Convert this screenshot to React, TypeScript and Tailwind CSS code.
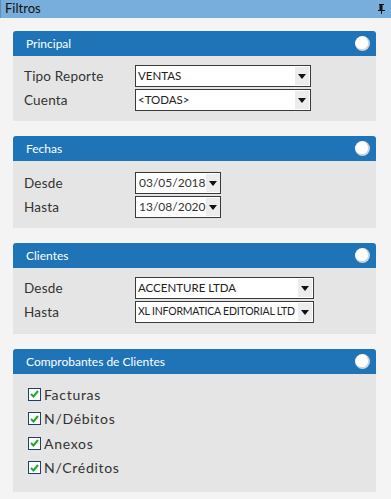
import React from "react";

function Arrow() {
  return (
    <div className="w-[14px] h-full bg-[#ececec] flex items-center justify-center shrink-0">
      <svg width="8" height="5" viewBox="0 0 8 5">
        <path d="M0 0 L8 0 L4 5 Z" fill="#111" />
      </svg>
    </div>
  );
}

function Combo({ value, width, tight }: { value: string; width: string; tight?: boolean }) {
  return (
    <div className={`${width} h-[22px] border border-[#3a3a3a] bg-white flex items-stretch`}>
      <div
        className={`flex-1 overflow-hidden whitespace-nowrap flex items-center pl-[2px] text-[#222] ${
          tight ? "text-[10.5px] tracking-[-0.2px]" : "text-[11.5px]"
        }`}
      >
        {value}
      </div>
      <div className="py-[1px] pr-[1px]">
        <Arrow />
      </div>
    </div>
  );
}

function DateBox({ value }: { value: string }) {
  return (
    <div className="w-[86px] h-[22px] border border-[#3a3a3a] bg-white flex items-stretch">
      <div className="flex-1 flex items-center pl-[3px] text-[12px] text-[#333]">{value}</div>
      <div className="py-[1px] pr-[1px]">
        <Arrow />
      </div>
    </div>
  );
}

function Panel({ title, children }: { title: string; children: React.ReactNode }) {
  return (
    <div>
      <div className="h-[25px] bg-[#1f74b7] rounded-t-[3px] flex items-center justify-between pl-[13px] pr-[6px]">
        <span className="text-white text-[12px]">{title}</span>
        <div className="w-[15px] h-[15px] rounded-full bg-white border-r-2 border-b-2 border-[#c9d3dc]" />
      </div>
      <div className="bg-[#e5e5e5]">{children}</div>
    </div>
  );
}

function Row({ label, children }: { label: string; children: React.ReactNode }) {
  return (
    <div className="flex items-center">
      <div className="w-[122px] pl-[11px] text-[13.5px] text-[#333] tracking-[0.2px]">{label}</div>
      {children}
    </div>
  );
}

function Check({ label }: { label: string }) {
  return (
    <div className="h-[24.5px] flex items-center">
      <div className="w-[13px] h-[13px] border border-[#1d3f6c] bg-white flex items-center justify-center">
        <svg width="9" height="8" viewBox="0 0 9 8">
          <path d="M1 4 L3.5 6.5 L8 1" stroke="#28a428" strokeWidth="2" fill="none" />
        </svg>
      </div>
      <span className="ml-[3px] text-[14px] tracking-[0.7px] text-[#333]">{label}</span>
    </div>
  );
}

export default function App() {
  return (
    <div className="w-[391px] h-[499px] bg-[#f4f4f4] font-['Lato',sans-serif] overflow-hidden">
      {/* title bar */}
      <div className="h-[18px] bg-[#77aedb] border-l border-[#5a8fbd] flex items-center justify-between pl-[4px] pr-[6px]">
        <span className="text-[13px] text-[#111]">Filtros</span>
        <svg width="7" height="10" viewBox="0 0 7 10">
          <path d="M1 0.5 H6 M2 1 V6 M4 1 V6 M0 6.5 H7 M3.5 7 V10" stroke="#111" strokeWidth="1" fill="none" />
          <rect x="2" y="1" width="2" height="5" fill="#111" />
        </svg>
      </div>

      <div className="pt-[13px] pl-[13px] pr-[15px] flex flex-col gap-[15px]">
        <Panel title="Principal">
          <div className="pt-[9px] pb-[10px] flex flex-col gap-[2px]">
            <Row label="Tipo Reporte">
              <Combo value="VENTAS" width="w-[176px]" />
            </Row>
            <Row label="Cuenta">
              <Combo value="<TODAS>" width="w-[176px]" />
            </Row>
          </div>
        </Panel>

        <Panel title="Fechas">
          <div className="pt-[11px] pb-[10px] flex flex-col gap-[2px]">
            <Row label="Desde">
              <DateBox value="03/05/2018" />
            </Row>
            <Row label="Hasta">
              <DateBox value="13/08/2020" />
            </Row>
          </div>
        </Panel>

        <Panel title="Clientes">
          <div className="pt-[9px] pb-[11px] flex flex-col gap-[2px]">
            <Row label="Desde">
              <Combo value="ACCENTURE LTDA" width="w-[179px]" />
            </Row>
            <Row label="Hasta">
              <Combo value="XL INFORMATICA EDITORIAL LTD" width="w-[179px]" tight />
            </Row>
          </div>
        </Panel>

        <Panel title="Comprobantes de Clientes">
          <div className="pt-[8px] pb-[12px] pl-[15px]">
            <Check label="Facturas" />
            <Check label="N/Débitos" />
            <Check label="Anexos" />
            <Check label="N/Créditos" />
          </div>
        </Panel>
      </div>
    </div>
  );
}
